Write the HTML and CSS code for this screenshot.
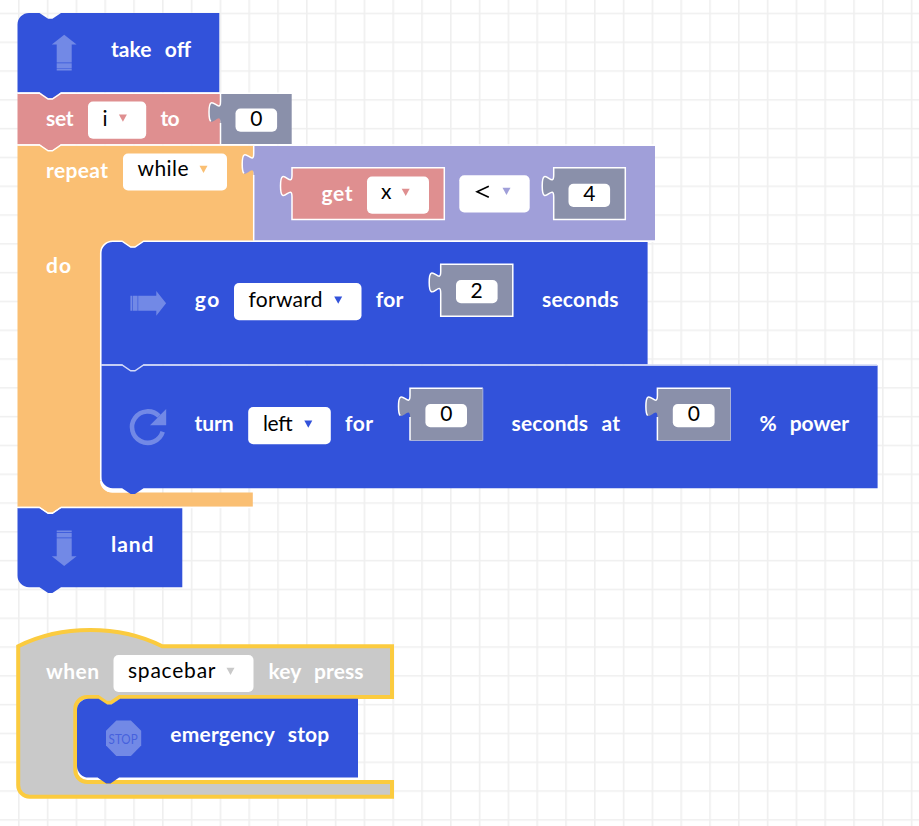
FILE: index.html
```html
<!DOCTYPE html>
<html lang="en">
<head>
<meta charset="utf-8">
<title>Block workspace</title>
<link rel="stylesheet" href="styles.css">
</head>
<body>
<main class="workspace">
<svg class="canvas" width="919" height="826" viewBox="0 0 919 826">
  <defs>
    <pattern id="grid" x="18" y="12.7" width="28.8" height="28.8" patternUnits="userSpaceOnUse">
      <path class="grid-line" d="M0 .8H28.8M.8 0V28.8"/>
    </pattern>
    <path id="caret" d="M-4 -3.5H4L0 3.8Z"/>
    <g id="arrow">
      <path d="M0-18L12.4-8.2H7.5V9.9H-7.5V-8.2H-12.4Z"/>
      <path d="M-7.5 10.5h15v4.7h-15zM-7.5 15.8h15v1.9h-15z"/>
    </g>
  </defs>
  <rect width="919" height="826" fill="url(#grid)"/>

  <!-- repeat while -->
  <g>
    <path class="loop" d="M17.5 145.5H253.5V241.5H143.6l-8.6 5.8h-4.3l-8.6-5.8H112.5a12 12 0 0 0-12 12V480.5a12 12 0 0 0 12 12H252.8V506.8H61l-8.6 5.8h-4.3l-8.6-5.8H17.5Z"/>
    <path class="edge" d="M100 480.5a12 12 0 0 0 12 12H130l-20-4Z"/>
    <text class="label" x="46" y="178" textLength="62">repeat</text>
    <rect class="field" x="123" y="153.5" width="104" height="37" rx="5"/>
    <text class="value" x="137.5" y="176" textLength="51">while</text>
    <use href="#caret" class="loop" x="203.5" y="169.3"/>
    <text class="label" x="46" y="273" textLength="25">do</text>
  </g>

  <!-- comparison -->
  <g>
    <path class="logic" d="M253.7 146H655V240.5H253.7V175c0-14.4-11.5 11.5-11.5-10.8s11.5 3.6 11.5-10.8Z"/>
    <path class="line" d="M253.7 240.5V175M253.7 146V153.4c0 14.4-11.5-11.5-11.5 10.8c0 5.6 .7 8.1 1.8 9.1"/>
    <path class="variable line" d="M292 167.8H444.3V219.5H292V196.8c0-14.4-11.5 11.5-11.5-10.8s11.5 3.6 11.5-10.8Z"/>
    <text class="label" x="321.5" y="201" textLength="31">get</text>
    <rect class="field" x="367" y="176.5" width="62" height="37.2" rx="5"/>
    <text class="value" x="381" y="199.3" textLength="10">x</text>
    <use href="#caret" class="variable" x="405.7" y="192.2"/>
    <rect class="field" x="459.3" y="175.2" width="70.4" height="37.2" rx="5"/>
    <path class="sign" d="M488.8 186.2L477 191.7 488.8 197.2"/>
    <use href="#caret" class="logic" x="506.5" y="191.2"/>
    <path class="number line" d="M553.7 167.8H625.3V219.5H553.7V196.8c0-14.4-11.5 11.5-11.5-10.8s11.5 3.6 11.5-10.8Z"/>
    <rect class="field" x="568.5" y="183.7" width="41.6" height="23.2" rx="5"/>
    <text class="value" x="583.3" y="201">4</text>
  </g>

  <!-- set i -->
  <g>
    <path class="variable" d="M17.5 93.5H220.3V144.3H61l-8.6 5.8h-4.3l-8.6-5.8H17.5Z"/>
    <path class="line" d="M17.5 145H39.5l8.6 5.8h4.3L61 145H655"/>
    <text class="label" x="46" y="126" textLength="27.5">set</text>
    <rect class="field" x="88" y="101.5" width="58.2" height="37.2" rx="5"/>
    <text class="value" x="102.5" y="125.5">i</text>
    <use href="#caret" class="variable" x="122.9" y="118"/>
    <text class="label" x="160.5" y="126" textLength="19">to</text>
    <path class="number" d="M220.5 94H291.7V144H220.5V123c0-14.4-11.5 11.5-11.5-10.8s11.5 3.6 11.5-10.8Z"/>
    <path class="line" d="M220.5 144.5V123M220.5 94V101.4c0 14.4-11.5-11.5-11.5 10.8c0 5.6 .7 8.1 1.8 9.1"/>
    <rect class="field" x="235.5" y="108.5" width="41.6" height="23.2" rx="5"/>
    <text class="value" x="250.2" y="126">0</text>
  </g>

  <!-- take off -->
  <g>
    <path class="motion" d="M29 13H39.5l8.6 5.8h4.3L61 13H219.3V92.2H61l-8.6 5.8h-4.3l-8.6-5.8H17.5V24.5A11.5 11.5 0 0 1 29 13Z"/>
    <path class="line" d="M17.5 93.2H39.5l8.6 5.8h4.3L61 93.2H291.5"/>
    <use href="#arrow" class="icon" x="64.2" y="52.7"/>
    <text class="label spaced" x="111" y="57" textLength="80">take off</text>
  </g>

  <!-- turn -->
  <g>
    <path class="motion" d="M101.2 365.5H877.6V488.2H143.6l-8.6 5.8h-4.3l-8.6-5.8H112.7A11.5 11.5 0 0 1 101.2 476.7Z"/>
    <path class="arc" d="M159 416.2A15.7 15.7 0 1 0 162.7 431.8"/>
    <path class="icon" d="M166.2 409V425.2H150Z"/>
    <text class="label" x="194.5" y="431" textLength="39">turn</text>
    <rect class="field" x="248.2" y="407" width="82.6" height="37.2" rx="5"/>
    <text class="value" x="263" y="431" textLength="29.5">left</text>
    <use href="#caret" class="motion" x="308.3" y="424"/>
    <text class="label" x="345" y="431" textLength="28">for</text>
    <path class="number" d="M410 388.2H482.8V440.5H410V417.2c0-14.4-11.5 11.5-11.5-10.8s11.5 3.6 11.5-10.8Z"/>
    <path class="line" d="M482.8 388.2H410V395.6c0 14.4-11.5-11.5-11.5 10.8c0 5.6 .7 8.1 1.8 9.1M410 417V440.5"/>
    <path class="line soft" d="M410 440.5H482.8V388.2"/>
    <rect class="field" x="425.4" y="404" width="41.6" height="23.2" rx="5"/>
    <text class="value" x="440.2" y="421.3">0</text>
    <text class="label spaced" x="511.5" y="431" textLength="108.5">seconds at</text>
    <path class="number" d="M657.4 388.2H730.5V440.5H657.4V417.2c0-14.4-11.5 11.5-11.5-10.8s11.5 3.6 11.5-10.8Z"/>
    <path class="line" d="M730.5 388.2H657.4V395.6c0 14.4-11.5-11.5-11.5 10.8c0 5.6 .7 8.1 1.8 9.1M657.4 417V440.5"/>
    <path class="line soft" d="M657.4 440.5H730.5V388.2"/>
    <rect class="field" x="672.8" y="404" width="41.8" height="23.2" rx="5"/>
    <text class="value" x="687.7" y="421.3">0</text>
    <text class="label spaced" x="759.5" y="431" textLength="89.5">% power</text>
  </g>

  <!-- go -->
  <g>
    <path class="motion" d="M112.7 241.5H122.1l8.6 5.8h4.3l8.6-5.8H647.6V364.5H143.6l-8.6 5.8h-4.3l-8.6-5.8H101.2V253A11.5 11.5 0 0 1 112.7 241.5Z"/>
    <path class="line" d="M100.7 480V253A12 12 0 0 1 112.7 241.2H122.1l8.6 5.8h4.3l8.6-5.8H655"/>
    <path class="line pale" d="M101.5 365H122.1l8.6 5.8h4.3l8.6-5.8H877"/>
    <use href="#arrow" class="icon" transform="translate(148.1 303.3) rotate(90)"/>
    <text class="label" x="194.8" y="307" textLength="24.5">go</text>
    <rect class="field" x="234" y="283" width="127.5" height="37.3" rx="5"/>
    <text class="value" x="248.5" y="307.3" textLength="74">forward</text>
    <use href="#caret" class="motion" x="338.2" y="300"/>
    <text class="label" x="375.8" y="307" textLength="27.5">for</text>
    <path class="number line" d="M440.7 264.2H512.8V316.3H440.7V293.2c0-14.4-11.5 11.5-11.5-10.8s11.5 3.6 11.5-10.8Z"/>
    <rect class="field" x="456" y="280" width="41.6" height="23.2" rx="5"/>
    <text class="value" x="470.5" y="297.5">2</text>
    <text class="label" x="542" y="307" textLength="76.5">seconds</text>
  </g>

  <!-- land -->
  <g>
    <path class="motion" d="M17.5 508H39.5l8.6 5.8h4.3L61 508H182.3V587.2H61l-8.6 5.8h-4.3l-8.6-5.8H29A11.5 11.5 0 0 1 17.5 575.7Z"/>
    <path class="line" d="M17.5 507.5H39.5l8.6 5.8h4.3L61 507.5H253"/>
    <use href="#arrow" class="icon" transform="translate(64.2 548.1) rotate(180)"/>
    <text class="label" x="111" y="552" textLength="42.5">land</text>
  </g>

  <!-- when key press -->
  <g>
    <path class="event" d="M18.2 646.3c43.2-21.6 100.8-21.6 144 0H392V697H119.5l-8.6 5.8h-4.3L98 697H87.3a12 12 0 0 0-12 12V770a12 12 0 0 0 12 12H392V796.7H29.7A11.5 11.5 0 0 1 18.2 785.2Z"/>
    <path class="edge" d="M78 770l10 10H358V776Z"/>
    <path class="motion" d="M88.5 698.7H98.6l8.6 5.8h4.3l8.6-5.8H358V777.6H119.1l-8.6 5.8h-4.3l-8.6-5.8H88.5A11.5 11.5 0 0 1 77 766.1V710.2A11.5 11.5 0 0 1 88.5 698.7Z"/>
    <text class="label" x="46" y="679" textLength="53">when</text>
    <rect class="field" x="113.5" y="655" width="140" height="37" rx="5"/>
    <text class="value" x="128" y="678.3" textLength="87.5">spacebar</text>
    <use href="#caret" class="muted" x="230.5" y="671.3"/>
    <text class="label spaced" x="268.5" y="679" textLength="95">key press</text>
    <path class="icon" d="M116.3 720.5H130.9L141.2 730.8V745.6L130.9 756H116.3L106 745.6V730.8Z"/>
    <text class="stop" x="108.6" y="743.5" textLength="29" lengthAdjust="spacingAndGlyphs">STOP</text>
    <text class="label spaced" x="170.3" y="742" textLength="159">emergency stop</text>
  </g>
</svg>
</main>
</body>
</html>
```
FILE: styles.css
```css
body {
  margin: 0;
  background: #fff;
  font-family: Lato, "Liberation Sans", sans-serif;
  overflow: hidden;
}

.workspace { width: 919px; height: 826px; }
.canvas { display: block; }

.grid-line { fill: none; stroke: #efefef; stroke-width: 1.6; }

.motion { fill: #3252da; }
.variable { fill: #df8f90; }
.loop { fill: #fabf73; }
.logic { fill: #a09fd9; }
.number { fill: #8a90aa; }
.muted { fill: #c9c9c9; }
.event { fill: #c9c9c9; stroke: #fbcb3f; stroke-width: 4; }

.line { stroke: #fff; stroke-width: 1.5; }
.line:not(.variable):not(.number) { fill: none; }
.soft { stroke: #a9b2d8; stroke-width: 1; }
.pale { stroke: #d3daf8; }
.edge { fill: #fff; }

.icon { fill: #7289e6; }
.arc { fill: none; stroke: #7289e6; stroke-width: 4.6; }
.field { fill: #fff; }
.sign { fill: none; stroke: #000; stroke-width: 1.6; }

.label { fill: #fff; font-size: 21px; font-weight: 700; }
.value { fill: #000; font-size: 21px; font-weight: 400; }
.spaced { word-spacing: 8px; }
.stop { fill: #4661dd; font-size: 14px; }
```
